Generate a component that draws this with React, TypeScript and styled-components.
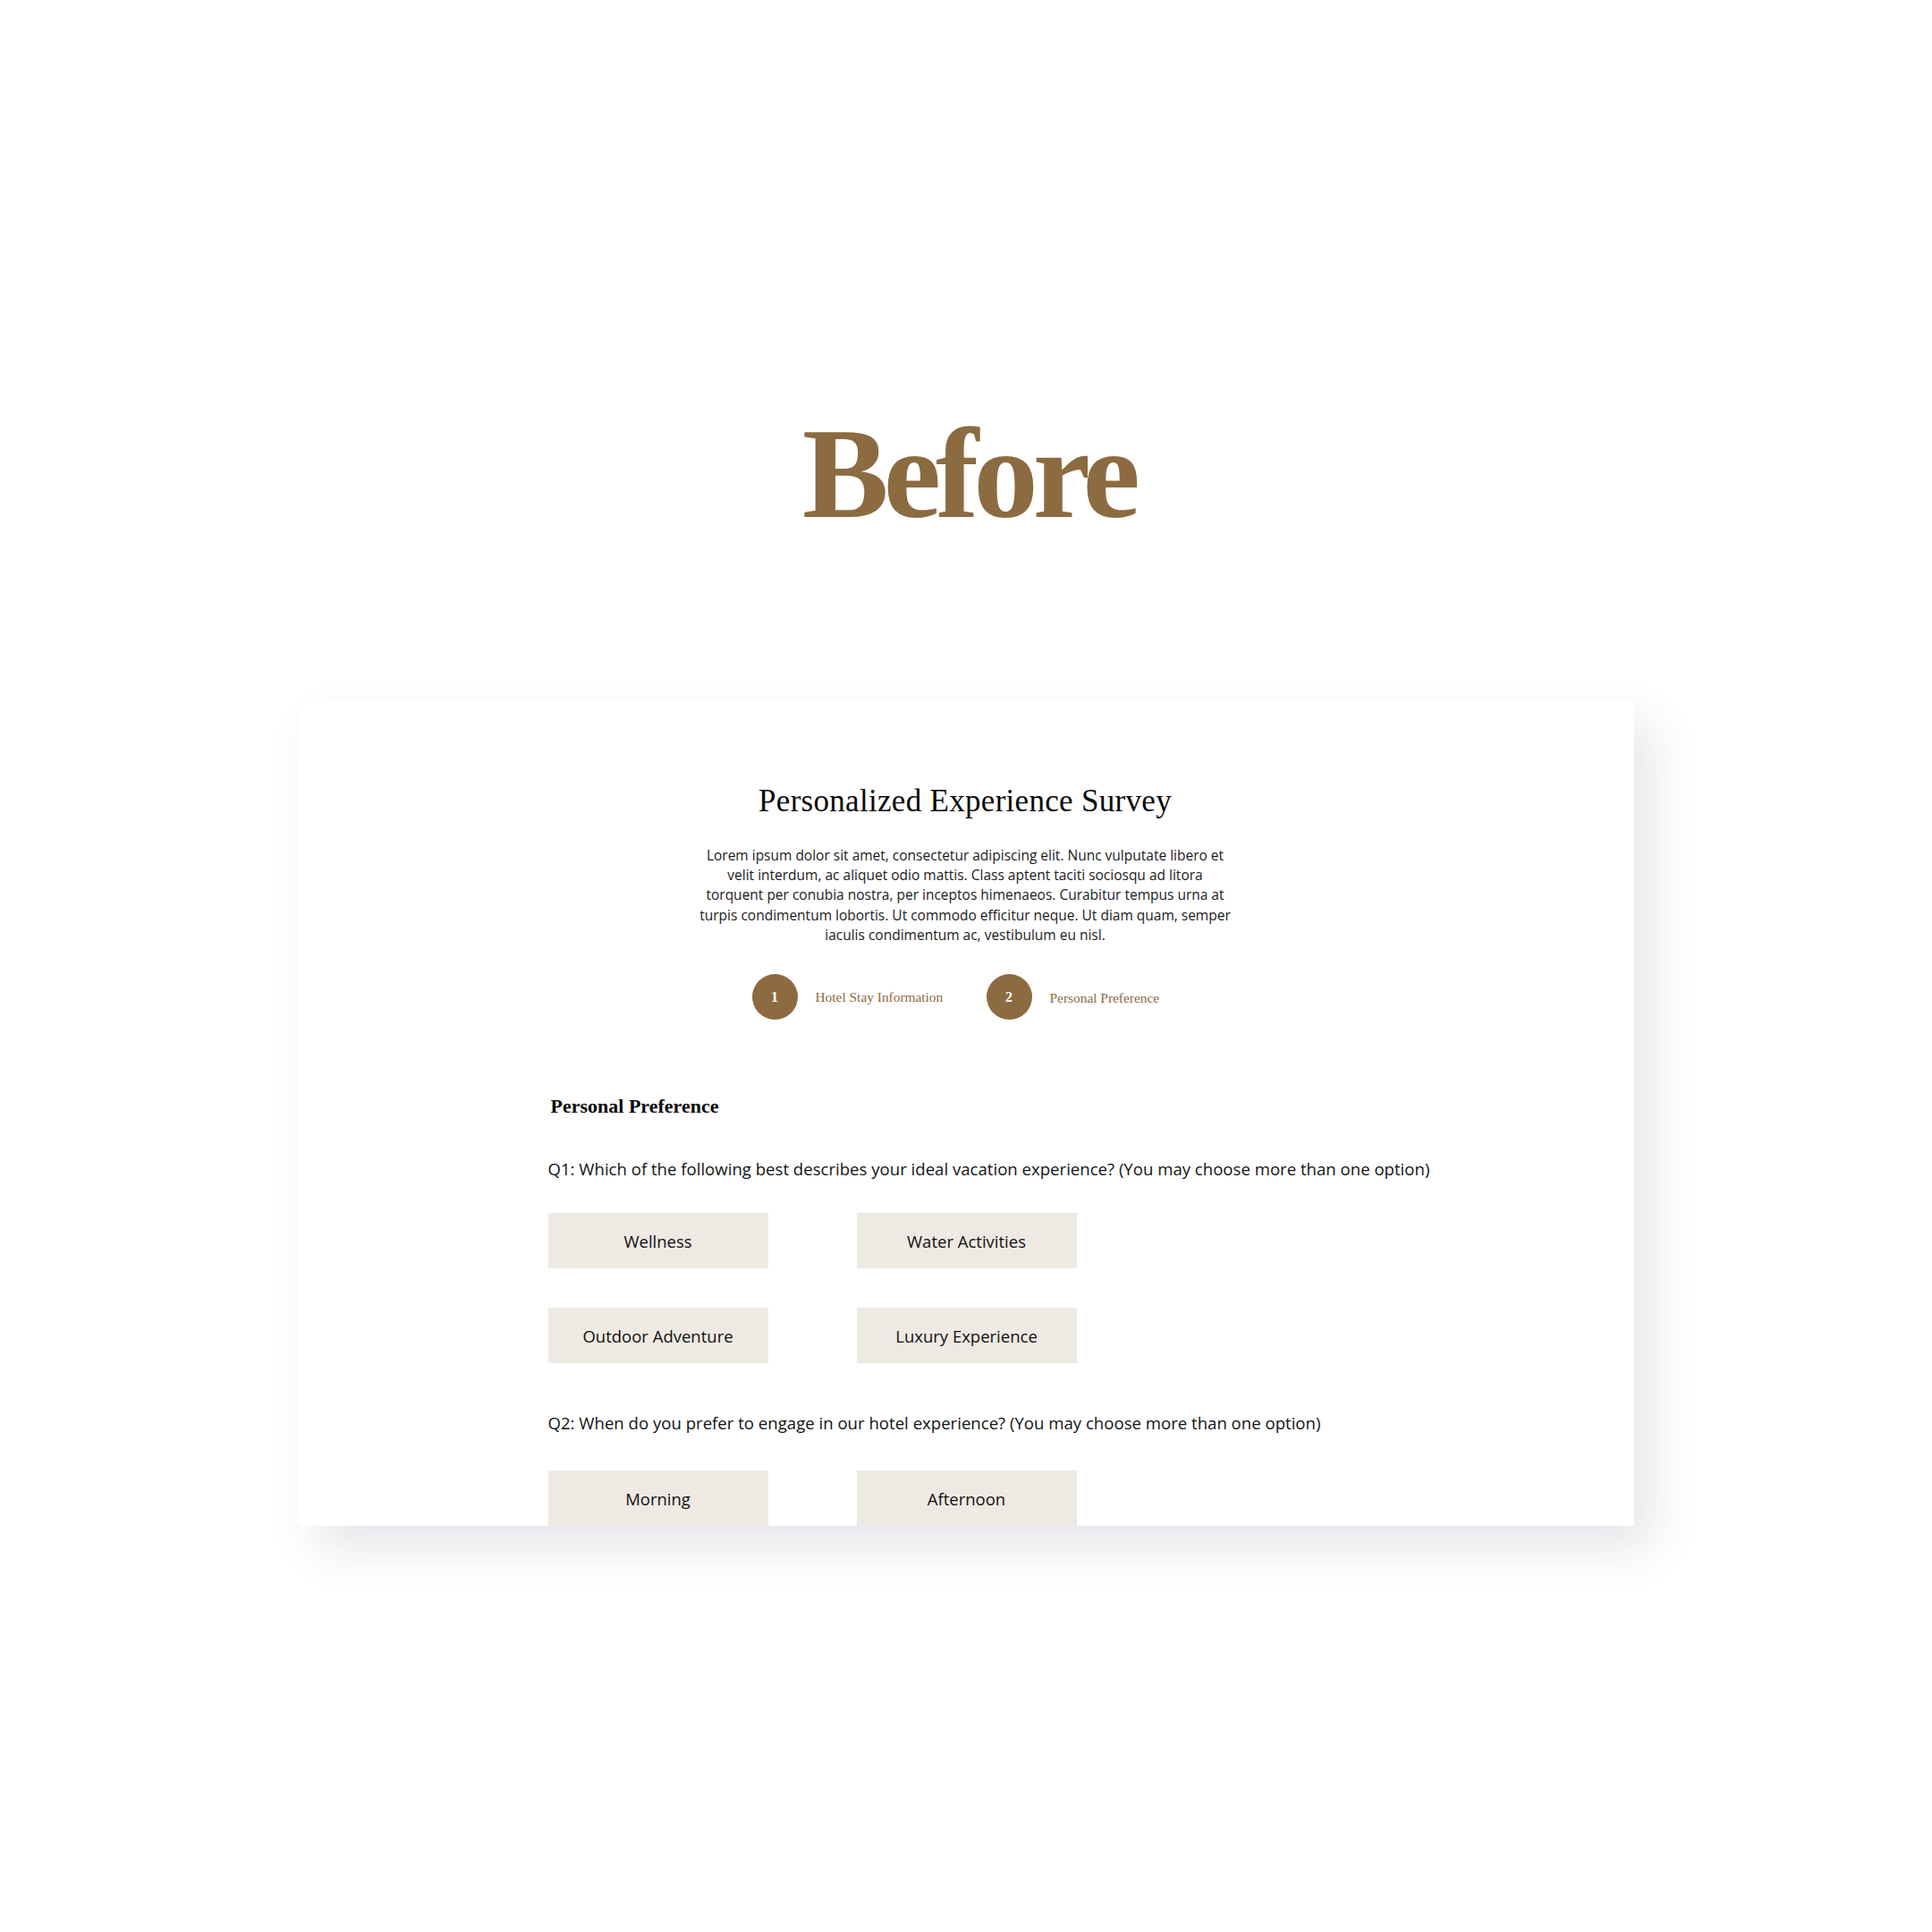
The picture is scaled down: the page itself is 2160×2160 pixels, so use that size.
import React from "react";
import styled, { createGlobalStyle } from "styled-components";

const GlobalStyle = createGlobalStyle`
  html, body {
    margin: 0;
    padding: 0;
    background: #ffffff;
  }
  * { box-sizing: border-box; }
`;

const BROWN = "#8c6b41";

const Page = styled.main`
  min-height: 2160px;
  padding-top: 457px;
  display: flex;
  flex-direction: column;
  align-items: center;
  background: #ffffff;
`;

const BeforeTitle = styled.h1`
  margin: 0;
  font-family: "Liberation Serif", "Times New Roman", serif;
  font-weight: 700;
  font-size: 145px;
  line-height: 145px;
  letter-spacing: -6px;
  color: ${BROWN};
  padding-left: 6px;
`;

const Card = styled.section`
  margin-top: 182px;
  width: 1493px;
  height: 922px;
  background: #ffffff;
  box-shadow: 20px 25px 50px rgba(40, 50, 80, 0.12);
  overflow: hidden;
  padding: 90px 281px 0 279px;
  display: flex;
  flex-direction: column;
`;

const Header = styled.header`
  display: flex;
  flex-direction: column;
  align-items: center;
`;

const SurveyTitle = styled.h2`
  margin: 0;
  font-family: "Liberation Serif", "Times New Roman", serif;
  font-weight: 400;
  font-size: 35px;
  line-height: 44px;
  letter-spacing: 0.3px;
  color: #0a0a0a;
`;

const Intro = styled.p`
  margin: 27px 0 0;
  font-family: "Open Sans", "Noto Sans", sans-serif;
  font-size: 15.5px;
  line-height: 22.2px;
  text-align: center;
  color: #1b1b1b;
  white-space: nowrap;
`;

const Steps = styled.ol`
  list-style: none;
  margin: 33px 0 0;
  padding: 0 0 0 5px;
  display: flex;
  gap: 42px;
  justify-content: center;
`;

const Step = styled.li`
  width: 220px;
  display: flex;
  align-items: center;
  gap: 20px;
`;

const StepCircle = styled.span`
  width: 51px;
  height: 51px;
  border-radius: 50%;
  background: ${BROWN};
  color: #ffffff;
  display: flex;
  align-items: center;
  justify-content: center;
  font-family: "Liberation Serif", "Times New Roman", serif;
  font-weight: 700;
  font-size: 16px;
  flex-shrink: 0;
`;

const StepLabel = styled.span<{ $drop?: number }>`
  font-family: "Liberation Serif", "Times New Roman", serif;
  font-size: 15.4px;
  color: ${BROWN};
  white-space: nowrap;
  padding-top: ${(p) => p.$drop ?? 0}px;
`;

const Section = styled.div`
  margin-top: 82px;
  display: flex;
  flex-direction: column;
`;

const SectionHeading = styled.h3`
  margin: 0;
  padding-left: 3px;
  font-family: "Liberation Serif", "Times New Roman", serif;
  font-weight: 700;
  font-size: 22px;
  line-height: 30px;
  color: #0a0a0a;
`;

const Question = styled.p<{ $top: number }>`
  margin: ${(p) => p.$top}px 0 0;
  font-family: "Open Sans", "Noto Sans", sans-serif;
  font-size: 18.6px;
  line-height: 26px;
  color: #141414;
  white-space: nowrap;
`;

const OptionGrid = styled.div<{ $top: number }>`
  margin-top: ${(p) => p.$top}px;
  display: grid;
  grid-template-columns: repeat(2, 246px);
  column-gap: 99px;
  row-gap: 44px;
`;

const Option = styled.button`
  height: 62px;
  border: none;
  border-radius: 0;
  background: #eee9e3;
  display: flex;
  align-items: center;
  justify-content: center;
  font-family: "Open Sans", "Noto Sans", sans-serif;
  font-size: 18.5px;
  color: #111111;
  padding: 0;
  cursor: pointer;
`;

const q1Options = ["Wellness", "Water Activities", "Outdoor Adventure", "Luxury Experience"];
const q2Options = ["Morning", "Afternoon"];

export default function App() {
  return (
    <>
      <GlobalStyle />
      <Page>
        <BeforeTitle>Before</BeforeTitle>
        <Card>
          <Header>
            <SurveyTitle>Personalized Experience Survey</SurveyTitle>
            <Intro>
              Lorem ipsum dolor sit amet, consectetur adipiscing elit. Nunc vulputate libero et
              <br />
              velit interdum, ac aliquet odio mattis. Class aptent taciti sociosqu ad litora
              <br />
              torquent per conubia nostra, per inceptos himenaeos. Curabitur tempus urna at
              <br />
              turpis condimentum lobortis. Ut commodo efficitur neque. Ut diam quam, semper
              <br />
              iaculis condimentum ac, vestibulum eu nisl.
            </Intro>
            <Steps>
              <Step>
                <StepCircle>1</StepCircle>
                <StepLabel>Hotel Stay Information</StepLabel>
              </Step>
              <Step>
                <StepCircle>2</StepCircle>
                <StepLabel $drop={2}>Personal Preference</StepLabel>
              </Step>
            </Steps>
          </Header>
          <Section>
            <SectionHeading>Personal Preference</SectionHeading>
            <Question $top={42}>
              Q1: Which of the following best describes your ideal vacation experience? (You may choose more than one option)
            </Question>
            <OptionGrid $top={36}>
              {q1Options.map((o) => (
                <Option key={o}>{o}</Option>
              ))}
            </OptionGrid>
            <Question $top={54}>
              Q2: When do you prefer to engage in our hotel experience? (You may choose more than one option)
            </Question>
            <OptionGrid $top={40}>
              {q2Options.map((o) => (
                <Option key={o}>{o}</Option>
              ))}
            </OptionGrid>
          </Section>
        </Card>
      </Page>
    </>
  );
}
